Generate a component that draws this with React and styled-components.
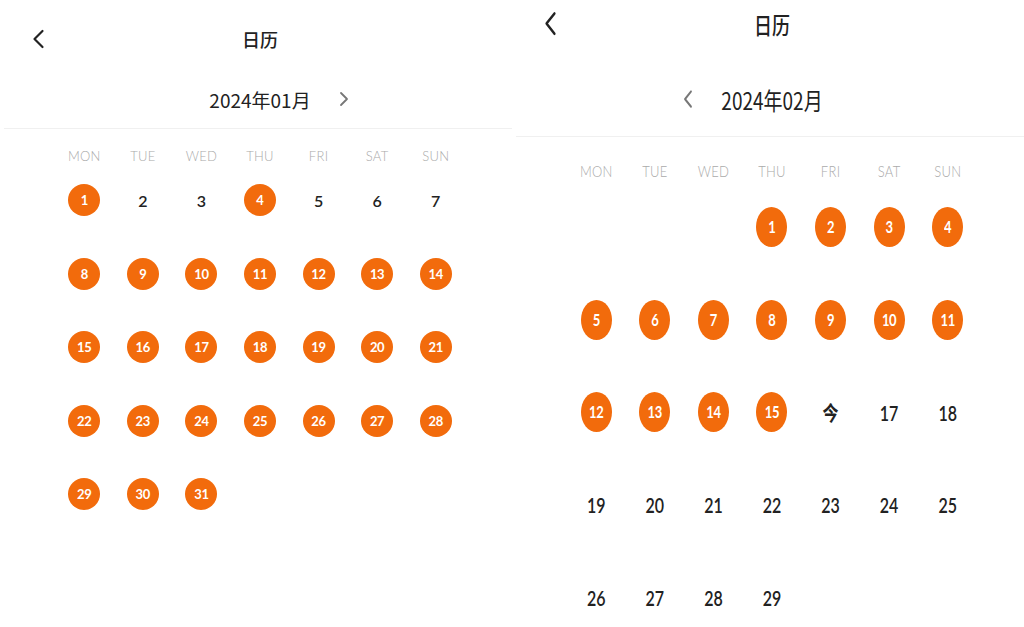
import React from "react";
import styled, { createGlobalStyle } from "styled-components";

const Global = createGlobalStyle`
  html, body { margin: 0; padding: 0; background: #ffffff; }
  body {
    width: 1024px; height: 627px; overflow: hidden;
    font-family: Lato, "Noto Sans", "Noto Sans CJK SC", sans-serif;
    color: #222;
  }
`;

const Page = styled.div`
  display: flex;
  width: 1024px;
  height: 627px;
  background: #fff;
`;

const Panel = styled.section`
  width: 512px;
  box-sizing: border-box;
  padding-left: 8px;
  display: flex;
  flex-direction: column;
  overflow: hidden;
`;

const Header = styled.header`
  height: ${(p) => p.$h}px;
  padding-bottom: ${(p) => p.$pb}px;
  box-sizing: border-box;
  display: grid;
  grid-template-columns: 1fr auto 1fr;
  align-items: center;
`;

const BackButton = styled.button`
  justify-self: start;
  margin-left: 24px;
  padding: 0;
  border: 0;
  background: none;
  display: flex;
  align-items: center;
`;

const Title = styled.h1`
  margin: 0;
  font-family: "Noto Sans CJK SC", "Noto Sans", sans-serif;
  font-size: 18px;
  font-weight: 500;
  color: #222;
  transform: scaleY(${(p) => p.$sy});
`;

const MonthBar = styled.div`
  height: ${(p) => p.$h}px;
  padding-bottom: ${(p) => p.$pb}px;
  margin-left: -4px;
  padding-left: 4px;
  border-bottom: 1px solid #f0f0f0;
  box-sizing: content-box;
  display: flex;
  align-items: center;
  justify-content: center;
  gap: 25px;
`;

const MonthText = styled.span`
  font-family: "Noto Sans CJK SC", "Noto Sans", sans-serif;
  font-size: 19px;
  font-weight: 400;
  color: #222;
  transform: scaleY(${(p) => p.$sy});
`;

const Arrow = styled.button`
  width: 16px;
  padding: 0;
  border: 0;
  background: none;
  display: flex;
  justify-content: center;
  visibility: ${(p) => (p.$hidden ? "hidden" : "visible")};
`;

const Weekdays = styled.div`
  width: 410px;
  margin: ${(p) => p.$mt}px auto 0;
  height: ${(p) => p.$h}px;
  display: grid;
  grid-template-columns: repeat(7, 1fr);
  align-items: center;
`;

const Weekday = styled.span`
  text-align: center;
  font-family: Lato, "Noto Sans", sans-serif;
  font-size: 13px;
  font-weight: 300;
  letter-spacing: 0.3px;
  color: #aaaaaa;
  transform: scaleY(${(p) => p.$sy});
`;

const DateGrid = styled.div`
  width: 410px;
  margin: ${(p) => p.$mt}px auto 0;
  display: grid;
  grid-template-columns: repeat(7, 1fr);
  grid-auto-rows: ${(p) => p.$h}px;
  row-gap: ${(p) => p.$gap}px;
`;

const Cell = styled.div`
  display: flex;
  align-items: center;
  justify-content: center;
`;

const Day = styled.span`
  width: ${(p) => p.$w}px;
  height: 100%;
  border-radius: 50%;
  display: flex;
  align-items: center;
  justify-content: center;
  background: ${(p) => (p.$marked ? "#f26b0c" : "transparent")};
  color: ${(p) => (p.$marked ? "#fff" : "#222")};
  font-family: Lato, "Noto Sans", "Noto Sans CJK SC", sans-serif;
  font-size: ${(p) => (p.$marked ? 13 : 16)}px;
  font-weight: ${(p) => (p.$marked ? 700 : 600)};
`;

const DayLabel = styled.span`
  display: inline-block;
  transform: scaleY(${(p) => p.$sy});
  letter-spacing: ${(p) => (p.$marked ? "-0.3px" : "0")};
`;

const BackIcon = ({ sy }) => (
  <svg width="13" height={20 * sy} viewBox="0 0 13 20" preserveAspectRatio="none">
    <path d="M10.5 2 L2.5 10 L10.5 18" fill="none" stroke="#222" strokeWidth="2.2" strokeLinecap="round" strokeLinejoin="round" />
  </svg>
);

const ChevronIcon = ({ dir, sy }) => (
  <svg width="10" height={16 * sy} viewBox="0 0 10 16" preserveAspectRatio="none">
    <path
      d={dir === "left" ? "M8 2 L2 8 L8 14" : "M2 2 L8 8 L2 14"}
      fill="none"
      stroke="#777"
      strokeWidth="1.8"
      strokeLinecap="round"
      strokeLinejoin="round"
    />
  </svg>
);

const WEEK = ["MON", "TUE", "WED", "THU", "FRI", "SAT", "SUN"];

const CalendarPanel = ({ cfg, month, offset, days, marked, today, showPrev, showNext }) => {
  const cells = [];
  for (let i = 0; i < offset; i++) cells.push(null);
  for (let d = 1; d <= days; d++) cells.push(d);
  return (
    <Panel>
      <Header $h={cfg.headerH} $pb={cfg.headerPb}>
        <BackButton aria-label="back">
          <BackIcon sy={cfg.sy} />
        </BackButton>
        <Title $sy={cfg.sy}>日历</Title>
        <span />
      </Header>
      <MonthBar $h={cfg.monthH} $pb={cfg.monthPb}>
        <Arrow $hidden={!showPrev} aria-label="prev">
          <ChevronIcon dir="left" sy={cfg.sy} />
        </Arrow>
        <MonthText $sy={cfg.sy}>{month}</MonthText>
        <Arrow $hidden={!showNext} aria-label="next">
          <ChevronIcon dir="right" sy={cfg.sy} />
        </Arrow>
      </MonthBar>
      <Weekdays $mt={cfg.weekMt} $h={cfg.weekH}>
        {WEEK.map((w) => (
          <Weekday key={w} $sy={cfg.sy}>{w}</Weekday>
        ))}
      </Weekdays>
      <DateGrid $mt={cfg.gridMt} $h={cfg.cellH} $gap={cfg.rowGap}>
        {cells.map((d, i) => {
          if (d === null) return <Cell key={"e" + i} />;
          const isMarked = marked(d);
          const label = d === today ? "今" : d;
          return (
            <Cell key={d}>
              <Day $marked={isMarked} $w={cfg.circleW}>
                <DayLabel $sy={cfg.sy} $marked={isMarked}>{label}</DayLabel>
              </Day>
            </Cell>
          );
        })}
      </DateGrid>
    </Panel>
  );
};

const LEFT = { headerH: 78, headerPb: 0, monthH: 42, monthPb: 8, weekMt: 17, weekH: 20, gridMt: 18, cellH: 32, rowGap: 41.5, circleW: 32, sy: 1 };
const RIGHT = { headerH: 73, headerPb: 25, monthH: 53, monthPb: 10, weekMt: 21, weekH: 26, gridMt: 23, cellH: 40, rowGap: 52.5, circleW: 31, sy: 1.26 };

export default function App() {
  return (
    <>
      <Global />
      <Page>
        <CalendarPanel
          cfg={LEFT}
          month="2024年01月"
          offset={0}
          days={31}
          marked={(d) => d === 1 || d === 4 || d >= 8}
          showPrev={false}
          showNext={true}
        />
        <CalendarPanel
          cfg={RIGHT}
          month="2024年02月"
          offset={3}
          days={29}
          marked={(d) => d <= 15}
          today={16}
          showPrev={true}
          showNext={false}
        />
      </Page>
    </>
  );
}
